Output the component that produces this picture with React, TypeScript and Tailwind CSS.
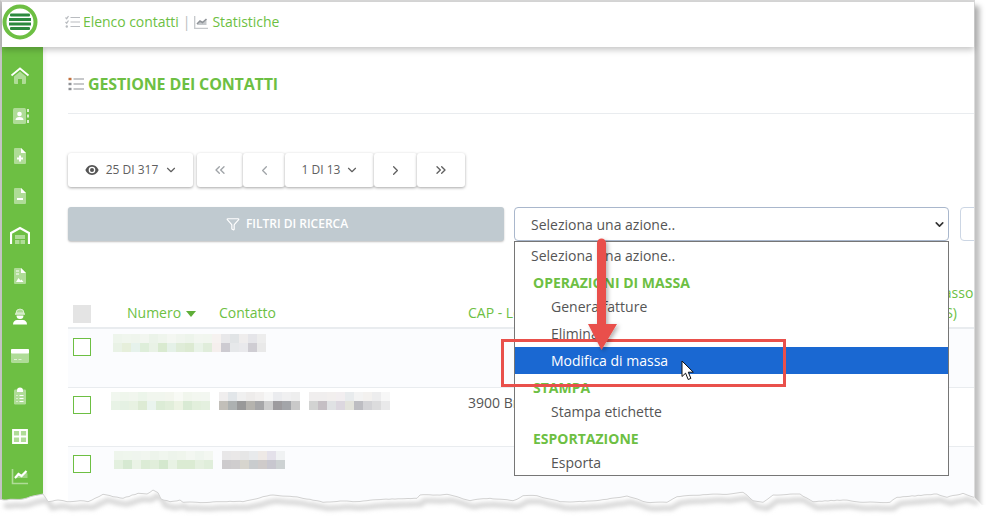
import React from "react";
import { ChevronDown, ChevronLeft, ChevronRight, ChevronsLeft, ChevronsRight, Filter } from "lucide-react";

const G = "#6dbf43";
const W = "rgba(255,255,255,.45)";

const side: React.ReactNode[] = [
  <><path d="M4 10.500 10 5.500l6 5V17a1 1 0 0 1-1 1h-3v-5H8v5H5a1 1 0 0 1-1-1z" fill={W} /><path d="M1.500 9.500 10 2.500l8.500 7" fill="none" stroke="#fff" strokeWidth="1.800" /></>,
  <><rect x="3" y="2" width="13" height="16" rx="1.500" fill={W} /><circle cx="9.500" cy="8" r="2.300" fill="#fff" /><path d="M5.500 14c0-2 1.500-3 4-3s4 1 4 3z" fill="#fff" /><path d="M18 3v3M18 8.500v3M18 14v3" stroke="#fff" strokeWidth="1.500" /></>,
  <><path d="M4 3a1 1 0 0 1 1-1h6l5 5v10a1 1 0 0 1-1 1H5a1 1 0 0 1-1-1z" fill={W} /><path d="M11 2l5 5h-5z" fill="#fff" /><path d="M10 9.500v6M7 12.500h6" stroke="#fff" strokeWidth="2" /></>,
  <><path d="M4 3a1 1 0 0 1 1-1h6l5 5v10a1 1 0 0 1-1 1H5a1 1 0 0 1-1-1z" fill={W} /><path d="M11 2l5 5h-5z" fill="#fff" /><path d="M7 13h6" stroke="#fff" strokeWidth="2" /></>,
  <><path d="M1 18V7l9-5 9 5v11" fill="none" stroke="#fff" strokeWidth="2.200" /><path d="M5 9h10v4H5zM5 14h4.500v4H5zM10.500 14H15v4h-4.500z" fill={W} /></>,
  <><path d="M4 3a1 1 0 0 1 1-1h6l5 5v10a1 1 0 0 1-1 1H5a1 1 0 0 1-1-1z" fill={W} /><path d="M11 2l5 5h-5z" fill="#fff" /><path d="M6 16l2.500-4 2 2.500 1-1 2 2.500z" fill="#fff" /><path d="M6 5h3M6 8h3" stroke="#fff" strokeWidth="1" /></>,
  <><path d="M6 7a4 4 0 0 1 8 0z" fill={W} stroke="#fff" strokeWidth=".6" /><path d="M5 8h10" stroke="#fff" strokeWidth="1.200" /><path d="M6.500 9.500h7a3.500 3.500 0 0 1-7 0z" fill="#fff" /><path d="M3 18.500c0-3 2-4.500 4-4.500h6c2 0 4 1.500 4 4.500z" fill="#fff" /></>,
  <><rect x="1" y="3" width="18" height="14" rx="1.500" fill={W} /><rect x="1" y="3" width="18" height="4.500" rx="1" fill="#fff" /><path d="M4 13.500h3M8.500 13.500h3" stroke="#fff" strokeOpacity=".6" strokeWidth="1" /></>,
  <><rect x="4" y="3.500" width="12" height="15" rx="1.200" fill={W} /><path d="M7 4.500a3 3 0 0 1 6 0V6H7z" fill="#fff" /><path d="M6.500 9.500h1M9.500 9.500h4M6.500 12.500h1M9.500 12.500h4M6.500 15.500h1M9.500 15.500h4" stroke="#fff" strokeWidth="1.200" /></>,
  <><rect x="3" y="4" width="14" height="13" fill={W} /><path d="M3 4h14v13H3zM10 4v13M3 10.500h14" fill="none" stroke="#fff" strokeWidth="1.800" /></>,
  <><path d="M2.500 3v14.500H18" fill="none" stroke={W} strokeWidth="1.600" /><path d="M5 13l3.500-4 3 2 4-4.500 2 1v4.500H5z" fill="#fff" fillOpacity=".35" /><path d="M5 12l3.500-4 3 2 5-5" fill="none" stroke="#fff" strokeWidth="2.200" /></>,
];

const Ic = ({ children }: { children: React.ReactNode }) => (
  <div className="h-[40px] flex items-center">
    <svg width="20" height="20" viewBox="0 0 20 20" className="ml-[8px]">{children}</svg>
  </div>
);

const Mosaic = ({ rows, className }: { rows: string[][]; className?: string }) => (
  <div className={className}>
    {rows.map((r, i) => (
      <div key={i} className="flex">
        {r.map((c, j) => (
          <div key={j} className="w-[9px] h-[9px] shrink-0" style={{ backgroundColor: c }} />
        ))}
      </div>
    ))}
  </div>
);

const m1 = [
  ["#eef5ec", "#f0f6ee", "#eff5ed", "#f2f6f0", "#ebf3e9", "#eff5ed", "#f4f7f2", "#f0f5ee", "#edf4eb", "#f2f6f0", "#f1f6ef", "#f6f2f0", "#e8e8ea", "#e1e4e6", "#efeded", "#e5e5e9", "#ededed"],
  ["#e9f2e6", "#e6efdb", "#e6f2ec", "#deeeda", "#e9f2e6", "#d9ead0", "#e5f1e8", "#dfecd8", "#dcead2", "#e9f3e8", "#e0eddb", "#f5efed", "#cdcbd1", "#e6e8ea", "#e9e9ec", "#cfcdd3", "#e9e9e9"],
];
const m2a = [
  ["#f1f7ef", "#eff6ec", "#f1f6ee", "#ecf5ea", "#f1f6ee", "#f1f6ee", "#f3f6ee", "#f8faf5", "#f1f6ed", "#f3f7f0", "#f3f7f1"],
  ["#e8f3e6", "#e5f1e3", "#e8f2e2", "#ddebd4", "#eaf4ee", "#dcecd6", "#e1eeda", "#ecf3e3", "#d9ead4", "#e2efdc", "#e4f0df"],
];
const m2b = [
  ["#f0eeee", "#e2e6e9", "#f0f0f0", "#eeeceb", "#f2f0ef", "#f7f7f7", "#ebecef", "#f0f0f1", "#eeeeee"],
  ["#c2bfb9", "#adb1b1", "#999999", "#b5b3ae", "#a6a6a8", "#cdcdcd", "#9d9b9e", "#a3a5a9", "#c9c9c9"],
];
const m2c = [
  ["#f0eeee", "#f0eeee", "#f2efee", "#f2eef0", "#e8ebed", "#f3f3f3", "#f3f1ef", "#ededee", "#f7f7f7"],
  ["#d2d3d2", "#c5bfc4", "#e0e2e4", "#dcd7df", "#e3e3dc", "#bdbdc2", "#d3d3d6", "#dcdcdd", "#e9e9ea"],
];
const m3a = [
  ["#eef5ec", "#eff6ed", "#eff5ee", "#f1f6ef", "#edf4eb", "#f0f6ee", "#edf4eb", "#eff5ec", "#f3f7f1", "#eff5ee", "#f3f7f1"],
  ["#e3f0df", "#d6e9d2", "#eaf3e6", "#dcecd6", "#e1eedb", "#d4e8ce", "#e8f2e4", "#dbebd3", "#dbebd3", "#e5f0e0", "#e0eedb"],
];
const m3b = [
  ["#e8e7e8", "#eae8e8", "#e6e6e6", "#e8eaec", "#eee9e6", "#e4e1ea", "#f0f2f3"],
  ["#cdcbcd", "#cfcdce", "#d7d5ce", "#c9ccce", "#cfcbca", "#c8c7cf", "#cdd2d3"],
];

const Box = ({ first }: { first: boolean }) => (
  <div className={`w-[18px] h-[18px] border border-[#6dbf43] bg-white ml-[5px] ${first ? "mt-[9px]" : "mt-[8px]"}`} />
);

const Row = ({ odd, first, a, b }: { odd: boolean; first: boolean; a: React.ReactNode; b: React.ReactNode }) => (
  <div className={`grid grid-cols-[43px_108px_249px_1fr] h-[59px] border-b border-[#e9ecef] ${odd ? "bg-[#fbfcfe]" : "bg-white"}`}>
    <div><Box first={first} /></div>
    {a}
    {b}
    <div />
  </div>
);

const PBtn = ({ children, className }: { children: React.ReactNode; className: string }) => (
  <div className={`h-[34px] flex items-center justify-center bg-white rounded-[3px] shadow-[0_1px_3px_rgba(0,0,0,.35)] text-[#606060] ${className}`}>
    {children}
  </div>
);

const Opt = ({ children, active, h }: { children: React.ReactNode; active?: boolean; h: string }) => (
  <div className={`flex items-center pl-[36px] text-[14px] ${h} ${active ? "bg-[#1a68d2] text-white" : "text-[#555]"}`}>{children}</div>
);
const Grp = ({ children, h }: { children: React.ReactNode; h: string }) => (
  <div className={`flex items-center pl-[18px] text-[14px] font-bold text-[#6dbf43] ${h}`}>{children}</div>
);

const e1 = [[0,58],[12,60],[30,58],[70,57],[100,48],[130,42],[138,55],[145,65],[175,60],[200,65],[240,62],[265,65],[285,55],[310,43],[340,50],[370,55],[415,40],[440,42],[460,30],[475,38],[482,57],[510,65],[540,60],[550,67],[630,67],[690,64],[730,65],[800,48],[820,45],[880,50],[930,58],[970,67],[1020,63],[1060,65],[1090,63],[1150,58],[1250,55],[1260,45],[1310,45],[1340,43],[1380,53],[1410,62],[1440,57]].map(([x, y]) => [x / 3, 480 + y / 3]);
const e2 = [[0,55],[70,62],[100,47],[140,47],[210,65],[280,65],[350,58],[410,48],[470,67],[530,67],[560,50],[640,44],[720,42],[760,37],[790,62],[820,67],[850,45],[930,42],[970,65],[1060,60],[1120,67],[1200,67],[1220,52],[1340,42],[1370,52],[1420,40],[1452,52]].map(([x, y]) => [490 + x / 3, 480 + y / 3]);
const pts = [...e1, ...e2];
const fine: number[][] = [];
pts.forEach((p, i) => {
  const q = pts[i + 1];
  if (!q) { fine.push(p); return; }
  const n = Math.max(1, Math.floor((q[0] - p[0]) / 3));
  for (let k = 0; k < n; k++) {
    const t = k / n;
    const x = p[0] + (q[0] - p[0]) * t;
    const j = k === 0 ? 0 : Math.sin(x * 7.3) * 0.3;
    fine.push([Math.round(x), +(p[1] + (q[1] - p[1]) * t + j).toFixed(1)]);
  }
});
const line = fine.map((p) => p.join(",")).join(" ");
const poly = `-2,${fine[0][1]} ${line} 975,498 982,505 992,505 992,520 -2,520`;

export default function App() {
  return (
    <div className="relative w-[990px] h-[518px] overflow-hidden bg-white font-['Open_Sans',sans-serif]">
      <div className="w-[975px] h-[518px] bg-white border-t-2 border-t-[#d9d9d9] border-l-2 border-l-[#c4c4c4] border-r border-r-[#dcdcdc] shadow-[5px_6px_5px_rgba(0,0,0,.25)] flex flex-col">
        <header className="relative z-10 h-[45px] shrink-0 bg-white shadow-[0_3px_6px_rgba(0,0,0,.22)] flex items-center pb-[5px]">
          <svg width="36" height="36" viewBox="0 0 36 36" className="ml-[0px]">
            <circle cx="18" cy="18" r="15.500" fill="#fff" stroke={G} strokeWidth="4" />
            <rect x="8" y="9.500" width="20" height="3" rx="1" fill="#2b8a3e" />
            <rect x="7" y="14" width="22" height="3" fill="#2b8a3e" />
            <rect x="7" y="18.500" width="22" height="3" fill="#2b8a3e" />
            <rect x="8" y="23" width="20" height="3" rx="1" fill="#2b8a3e" />
          </svg>
          <svg width="15" height="14" viewBox="0 0 15 14" className="ml-[27px]" fill="none" stroke="#b9bcc0">
            <path d="M5.500 2.500H15M5.500 7H15M5.500 11.500H15" strokeWidth="1.200" />
            <path d="M0.500 2.500l1.200 1.200L3.500 1M0.500 7l1.200 1.200L3.500 5.500" strokeWidth="1.200" />
            <circle cx="1.800" cy="11.500" r="1.200" fill="#b9bcc0" stroke="none" />
          </svg>
          <span className="ml-[3px] -mt-[1px] text-[14px] tracking-[-0.05px] text-[#6dbf43]">Elenco contatti</span>
          <span className="ml-[4px] -mt-[1px] text-[14px] text-[#b9bcc0]">|</span>
          <svg width="14" height="13" viewBox="0 0 14 13" className="ml-[4px]" fill="none">
            <path d="M0.700 0v12.300H14" stroke="#c5c8cb" strokeWidth="1.300" />
            <path d="M3 9l3-3.500 2.500 1.500L12.500 3.500V9z" fill="#c5c8cb" />
            <path d="M3 8l3-3 2.500 1.500L12.500 3" stroke="#8f9398" strokeWidth="1.600" />
          </svg>
          <span className="ml-[4px] -mt-[1px] text-[14px] tracking-[-0.05px] text-[#6dbf43]">Statistiche</span>
        </header>
        <div className="flex flex-1 min-h-0">
          <aside className="w-[41px] shrink-0 bg-[#6dbf43] pt-[9px] shadow-[2px_0_4px_rgba(0,0,0,.06)]">
            {side.map((s, i) => <Ic key={i}>{s}</Ic>)}
          </aside>
          <main className="relative flex-1 min-w-0 overflow-hidden pl-[25px] text-[14px]">
            <div className="h-[67px] border-b border-[#e9ecef] flex items-start pt-[26px]">
              <svg width="16" height="14" viewBox="0 0 16 14" fill="none" className="mt-[4px]">
                <path d="M5.500 2H16M5.500 7H16M5.500 12H16" stroke="#8f9296" strokeWidth="1.200" />
                <rect x="0.500" y="0.800" width="3" height="2.400" fill="#c2703d" />
                <rect x="0.500" y="5.800" width="3" height="2.400" fill="#8f9296" />
                <rect x="0.500" y="10.800" width="3" height="2.400" fill="#8f9296" />
              </svg>
              <h1 className="ml-[4px] text-[16px] leading-[22px] font-bold tracking-[-0.15px] text-[#6dbf43]">GESTIONE DEI CONTATTI</h1>
            </div>
            <div className="mt-[39px] flex text-[12px]">
              <PBtn className="w-[125px] gap-[4px] pl-[2px]">
                <svg width="14" height="12" viewBox="0 0 14 12" className="mr-[3px]">
                  <path d="M7 1C3.500 1 1.200 4 .4 6c.8 2 3.100 5 6.600 5s5.800-3 6.600-5C12.800 4 10.500 1 7 1z" fill="#555" />
                  <circle cx="7" cy="6" r="3.300" fill="#fff" />
                  <circle cx="7" cy="6" r="2" fill="#555" />
                </svg>
                <span>25 DI 317</span>
                <ChevronDown size={14} className="ml-[2px]" />
              </PBtn>
              <div className="ml-[4px] flex">
                <PBtn className="w-[46px] text-[#a0a4a8]"><ChevronsLeft size={16} /></PBtn>
                <PBtn className="w-[42px] text-[#a0a4a8]"><ChevronLeft size={15} /></PBtn>
                <PBtn className="w-[89px] gap-[5px] pl-[2px]"><span>1 DI 13</span><ChevronDown size={14} /></PBtn>
                <PBtn className="w-[43px]"><ChevronRight size={15} /></PBtn>
                <PBtn className="w-[48px]"><ChevronsRight size={16} /></PBtn>
              </div>
            </div>
            <div className="mt-[20px] flex">
              <div className="w-[436px] shrink-0 h-[34px] rounded-[3px] bg-[#c0cad0] shadow-[0_1px_2px_rgba(0,0,0,.25)] flex items-center justify-center pl-[2px] text-[12px] font-semibold text-white">
                <Filter size={14} className="mr-[6px]" />FILTRI DI RICERCA
              </div>
              <div className="ml-[10px] w-[435px] shrink-0 h-[34px] rounded-[4px] border border-[#a9b7cc] bg-white flex items-center pl-[16px] text-[#555]">
                <span className="flex-1">Seleziona una azione..</span>
                <ChevronDown size={13} strokeWidth={3} className="mr-[2px] text-[#333]" />
              </div>
              <div className="ml-[11px] w-[20px] shrink-0 h-[34px] rounded-l-[4px] border border-[#ccd6e4] bg-white" />
            </div>
            <div className="mt-[60px] h-[28px] grid grid-cols-[43px_108px_249px_1fr] items-center border-b-2 border-[#e9ecef] text-[#6dbf43]">
              <div className="ml-[5px] w-[18px] h-[18px] bg-[#e4e4e4]" />
              <div className="pl-[16px] flex items-center pb-[4px]">Numero
                <svg width="10" height="6" viewBox="0 0 10 6" className="ml-[5px] mt-[3px]"><path d="M0 0h10L5 6z" fill="#5fae38" /></svg>
              </div>
              <div className="pb-[4px]">Contatto</div>
              <div className="pb-[4px]">CAP - Località</div>
            </div>
            <div className="absolute top-[236px] left-[876px] w-[60px] text-center text-[14px] leading-[20px] text-[#6dbf43]">Incasso<br />(S)</div>
            <div className="relative">
              <Row first odd a={<Mosaic rows={m1} className="pt-[5px] ml-[2px]" />} b={<div />} />
              <Row first={false} odd={false}
                a={<Mosaic rows={m2a} className="pt-[4px]" />}
                b={<div className="flex pt-[4px] gap-[9px]"><Mosaic rows={m2b} /><Mosaic rows={m2c} /></div>}
              />
              <Row first={false} odd
                a={<Mosaic rows={m3a} className="pt-[4px] ml-[3px]" />}
                b={<Mosaic rows={m3b} className="pt-[4px] ml-[3px]" />}
              />
              <div className="absolute left-[400px] top-[63px] text-[#555]">3900 Briga</div>
            </div>
            <div className="absolute left-[471px] top-[194px] w-[435px] h-[235px] bg-white border border-[#767676] z-10 overflow-hidden">
              <Opt h="h-[27px]"><span className="-ml-[20px]">Seleziona una azione..</span></Opt>
              <Grp h="h-[27px]">OPERAZIONI DI MASSA</Grp>
              <Opt h="h-[24px] pb-[3px]">Genera fatture</Opt>
              <Opt h="h-[27px]">Elimina</Opt>
              <Opt h="h-[27px]" active>Modifica di massa</Opt>
              <Grp h="h-[27px]">STAMPA</Grp>
              <Opt h="h-[23px] pb-[2px]">Stampa etichette</Opt>
              <Grp h="h-[28px]">ESPORTAZIONE</Grp>
              <Opt h="h-[23px] pb-[2px]">Esporta</Opt>
            </div>
          </main>
        </div>
      </div>

      {/* annotation: red frame, arrow, cursor */}
      <div className="absolute left-[501px] top-[339px] w-[285px] h-[48px] border-[3px] border-[#e9504b] z-20" />
      <svg className="absolute left-0 top-0 z-20" width="990" height="518" viewBox="0 0 990 518" fill="none">
        <defs>
          <filter id="as" x="-50%" y="-20%" width="200%" height="140%"><feDropShadow dx="2" dy="2" stdDeviation="2" floodColor="#000" floodOpacity=".3" /></filter>
          <filter id="bl" x="-5%" y="-100%" width="110%" height="400%"><feGaussianBlur stdDeviation="2" /></filter>
          <clipPath id="below"><polygon points={poly} /></clipPath>
        </defs>
        <path d="M597 243a4.500 4.500 0 0 1 9 0v81h11l-15.500 26L588 324h9z" fill="#e9504b" filter="url(#as)" />
        <path d="M682 361v15.500l3.600-3.300 2.600 6.300 2.700-1.100-2.600-6.200h5z" fill="#fff" stroke="#111" strokeWidth="1" strokeLinejoin="miter" />
        <polygon points={poly} fill="#fff" />
        <g clipPath="url(#below)">
          <polyline points={fine.map(([x, y]) => `${x + 4},${y + 6}`).join(" ")} stroke="#d6d6d6" strokeWidth="5" filter="url(#bl)" />
        </g>
        <polyline points={line} stroke="#d2d2d2" strokeWidth="1" />
      </svg>
    </div>
  );
}
